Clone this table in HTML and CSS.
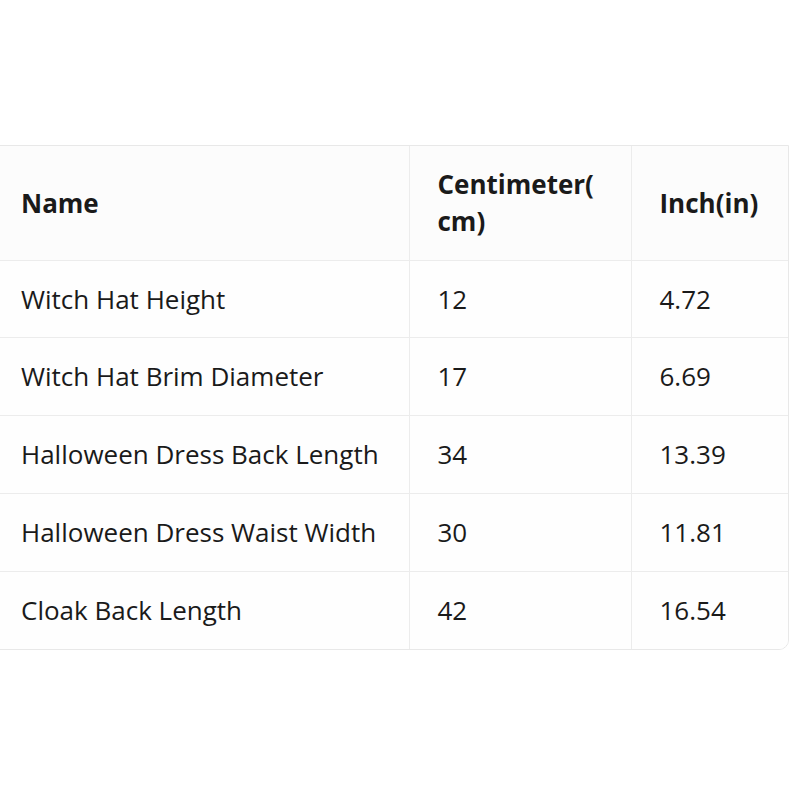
FILE: index.html
```html
<!DOCTYPE html>
<html>
<head>
<meta charset="utf-8">
<link rel="stylesheet" href="styles.css">
</head>
<body>
<div class="wrap">
<table class="size-table">
<colgroup><col class="c1"><col class="c2"><col class="c3"></colgroup>
<thead>
<tr><th>Name</th><th>Centimeter(<br>cm)</th><th>Inch(in)</th></tr>
</thead>
<tbody>
<tr><td>Witch Hat Height</td><td>12</td><td>4.72</td></tr>
<tr><td>Witch Hat Brim Diameter</td><td>17</td><td>6.69</td></tr>
<tr><td>Halloween Dress Back Length</td><td>34</td><td>13.39</td></tr>
<tr><td>Halloween Dress Waist Width</td><td>30</td><td>11.81</td></tr>
<tr><td>Cloak Back Length</td><td>42</td><td>16.54</td></tr>
</tbody>
</table>
</div>
</body>
</html>
```
FILE: styles.css
```css
html, body { margin: 0; padding: 0; background: #ffffff; }
body { font-family: "Open Sans", "Noto Sans", sans-serif; color: #1a1a1a; }
.wrap {
  margin-top: 145px;
  margin-left: -8px;
  width: 797px;
  border: 1px solid #e8e8e8;
  border-radius: 0 0 10px 0;
  overflow: hidden;
  box-sizing: border-box;
}
.size-table { border-collapse: collapse; width: 100%; table-layout: fixed; }
.c1 { width: 416px; }
.c2 { width: 222px; }
.c3 { width: auto; }
th, td {
  text-align: left;
  padding: 0 0 0 28px;
  font-size: 26px;
  line-height: 37px;
  border-right: 1px solid #ececec;
  border-bottom: 1px solid #ececec;
}
th:last-child, td:last-child { border-right: none; }
tbody tr:last-child td { border-bottom: none; }
th { font-weight: 700; height: 114px; background: #fcfcfc; }
td { height: 77px; background: #fefefe; }
tbody tr:first-child td { height: 76px; }
```
